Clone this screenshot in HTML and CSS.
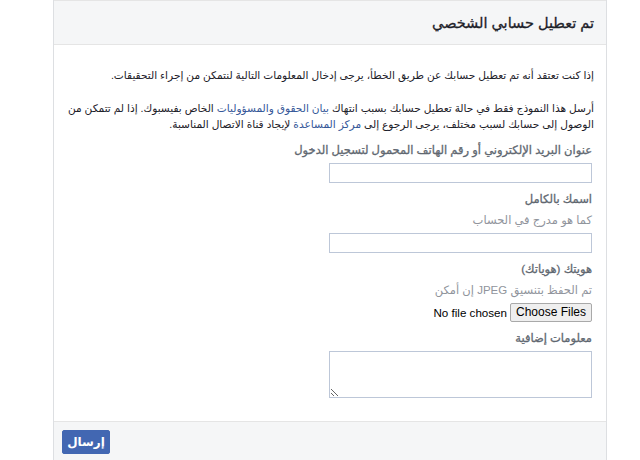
FILE: index.html
```html
<!DOCTYPE html>
<html lang="ar" dir="rtl">
<head>
<meta charset="utf-8">
<title>تم تعطيل حسابي الشخصي</title>
<link rel="stylesheet" href="styles.css">
</head>
<body>
<div class="card">
  <div class="card-header">
    <h2 class="title">تم تعطيل حسابي الشخصي</h2>
  </div>
  <div class="card-body">
    <p class="intro">إذا كنت تعتقد أنه تم تعطيل حسابك عن طريق الخطأ، يرجى إدخال المعلومات التالية لنتمكن من إجراء التحقيقات.</p>
    <p class="intro second">أرسل هذا النموذج فقط في حالة تعطيل حسابك بسبب انتهاك <a href="#" class="link">بيان الحقوق والمسؤوليات</a> الخاص بفيسبوك. إذا لم تتمكن من الوصول إلى حسابك لسبب مختلف، يرجى الرجوع إلى <a href="#" class="link">مركز المساعدة</a> لإيجاد قناة الاتصال المناسبة.</p>
    <form class="form">
      <div class="field">
        <label class="label">عنوان البريد الإلكتروني أو رقم الهاتف المحمول لتسجيل الدخول</label>
        <input class="text-input" type="text">
      </div>
      <div class="field">
        <label class="label">اسمك بالكامل</label>
        <div class="hint">كما هو مدرج في الحساب</div>
        <input class="text-input" type="text">
      </div>
      <div class="field">
        <label class="label">هويتك (هوياتك)</label>
        <div class="hint">تم الحفظ بتنسيق JPEG إن أمكن</div>
        <div class="file-row">
          <span class="file-btn">Choose Files</span>
          <span class="file-text">No file chosen</span>
        </div>
      </div>
      <div class="field">
        <label class="label">معلومات إضافية</label>
        <textarea class="textarea"></textarea>
      </div>
    </form>
  </div>
  <div class="card-footer">
    <button class="submit" type="button">إرسال</button>
  </div>
</div>
</body>
</html>
```
FILE: styles.css
```css
html, body {
  margin: 0;
  padding: 0;
  background: #ffffff;
}
body {
  font-family: "Liberation Sans", "DejaVu Sans", Arial, sans-serif;
  color: #1d2129;
  font-size: 12px;
}
.card {
  margin-right: 33px;
  width: 552px;
  border-left: 1px solid #dddfe2;
  border-right: 1px solid #dddfe2;
  background: #ffffff;
}
.card-header {
  height: 43px;
  background: #f5f6f7;
  border-bottom: 1px solid #e5e5e5;
  border-top: 1px solid #e5e5e5;
  padding: 0 12px;
  display: flex;
  align-items: center;
}
.title {
  margin: 0;
  font-size: 14.5px;
  font-weight: normal;
  color: #1d2129;
  -webkit-text-stroke: 0.3px #1d2129;
}
.card-body {
  padding: 22px 12px 23px 4px;
}
.intro {
  margin: 0;
  font-size: 10.6px;
  line-height: 16px;
  color: #1d2129;
}
.intro.second {
  margin-top: 17px;
}
.link {
  color: #365899;
  text-decoration: none;
}
.form {
  margin-top: 10px;
  padding-right: 2px;
}
.field {
  display: flex;
  flex-direction: column;
  align-items: flex-start;
  margin-bottom: 8px;
}
.field:last-child {
  margin-bottom: 0;
}
.label {
  font-size: 11.5px;
  font-weight: normal;
  color: #606770;
  -webkit-text-stroke: 0.3px #606770;
  line-height: 16px;
  margin-bottom: 5px;
}
.hint {
  font-size: 11.5px;
  color: #90949c;
  line-height: 16px;
  margin-bottom: 5px;
}
.text-input {
  width: 263px;
  height: 20px;
  box-sizing: border-box;
  border: 1px solid #bdc7d8;
  margin: 0;
  padding: 0 3px;
}
.file-row {
  display: flex;
  align-items: center;
  gap: 3px;
  height: 19px;
}
.file-btn {
  font-family: "Liberation Sans", Arial, sans-serif;
  font-size: 12px;
  color: #000;
  background: #efefef;
  border: 1px solid #a9a9a9;
  border-radius: 2px;
  padding: 0 5px;
  line-height: 17px;
}
.file-text {
  font-family: "Liberation Sans", Arial, sans-serif;
  font-size: 11.6px;
  color: #000;
}
.textarea {
  width: 263px;
  height: 47px;
  box-sizing: border-box;
  border: 1px solid #bdc7d8;
  margin: 0;
  resize: both;
}
.card-footer {
  background: #f5f6f7;
  border-top: 1px solid #e5e5e5;
  padding: 8px 8px 20px;
  display: flex;
  justify-content: flex-end;
}
.submit {
  width: 48px;
  height: 24px;
  background: #4267b2;
  border: 1px solid #4267b2;
  border-radius: 2px;
  color: #ffffff;
  font-family: "Liberation Sans", "DejaVu Sans", Arial, sans-serif;
  font-size: 12px;
  font-weight: bold;
  padding: 0;
}
```
